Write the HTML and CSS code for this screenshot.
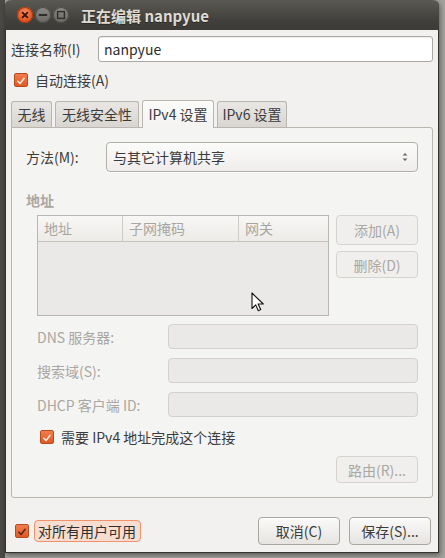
FILE: index.html
```html
<!doctype html>
<html lang="zh-CN">
<head>
    <meta charset="utf-8">
    <meta name="viewport" content="width=device-width, initial-scale=1">
    <title>正在编辑 nanpyue</title>
    <link rel="stylesheet" href="styles.css">
</head>
<body>
<div class="desktop">
    <div class="window">
        <div class="titlebar">
            <div class="controls">
                <span class="wbtn close">
                    <svg viewBox="0 0 16 16" width="16" height="16"><path d="M5.6 5.6l4.8 4.8M10.4 5.6l-4.8 4.8" stroke="#3b1608" stroke-width="1.8" stroke-linecap="round"/></svg>
                </span>
                <span class="wbtn">
                    <svg viewBox="0 0 16 16" width="16" height="16"><path d="M4.5 8h7" stroke="#2f2e2a" stroke-width="1.8" stroke-linecap="round"/></svg>
                </span>
                <span class="wbtn">
                    <svg viewBox="0 0 16 16" width="16" height="16"><rect x="4.6" y="4.6" width="6.8" height="6.8" fill="none" stroke="#2f2e2a" stroke-width="1.4"/></svg>
                </span>
            </div>
            <div class="title">正在编辑 nanpyue</div>
        </div>

        <div class="content">
            <div class="name-row">
                <label>连接名称(I)</label>
                <div class="entry">nanpyue</div>
            </div>

            <div class="check-row auto">
                <span class="check"><svg viewBox="0 0 14 14" width="14" height="14"><path d="M3.3 7.2l2.6 2.6 4.8-6" fill="none" stroke="#f6e9e1" stroke-width="1.8" stroke-linecap="round" stroke-linejoin="round"/></svg></span>
                自动连接(A)
            </div>

            <div class="tabs">
                <div class="tab t1">无线</div>
                <div class="tab t2">无线安全性</div>
                <div class="tab t3 active">IPv4 设置</div>
                <div class="tab t4">IPv6 设置</div>
            </div>

            <div class="panel">
                <div class="method-row">
                    <span class="method-label">方法(M):</span>
                    <div class="combo">
                        <span>与其它计算机共享</span>
                        <svg viewBox="0 0 8 14" width="8" height="14"><path d="M1.5 5.5L4 3l2.5 2.5zM1.5 8.5L4 11l2.5-2.5z" fill="#6b6964"/></svg>
                    </div>
                </div>

                <div class="section-title">地址</div>

                <div class="addr">
                    <div class="table">
                        <div class="thead">
                            <div class="th c1">地址</div>
                            <div class="th c2">子网掩码</div>
                            <div class="th c3">网关</div>
                        </div>
                        <div class="tbody">
                            <svg class="pointer" viewBox="0 0 13 20" width="13" height="20"><path d="M1 1v15.5l3.7-3.6 2.6 5.8 2.4-1.1-2.6-5.6h5.2z" fill="#fff" stroke="#111" stroke-width="1.1" stroke-linejoin="round"/></svg>
                        </div>
                    </div>
                    <div class="side-buttons">
                        <div class="button disabled">添加(A)</div>
                        <div class="button disabled">删除(D)</div>
                    </div>
                </div>

                <div class="fields">
                    <span class="field-label">DNS 服务器:</span>
                    <div class="field"></div>
                    <span class="field-label">搜索域(S):</span>
                    <div class="field"></div>
                    <span class="field-label">DHCP 客户端 ID:</span>
                    <div class="field"></div>
                </div>

                <div class="check-row require">
                    <span class="check"><svg viewBox="0 0 14 14" width="14" height="14"><path d="M3.3 7.2l2.6 2.6 4.8-6" fill="none" stroke="#f6e9e1" stroke-width="1.8" stroke-linecap="round" stroke-linejoin="round"/></svg></span>
                    需要 IPv4 地址完成这个连接
                </div>

                <div class="route-row">
                    <div class="button disabled">路由(R)...</div>
                </div>
            </div>

            <div class="footer">
                <div class="check-row all">
                    <span class="check"><svg viewBox="0 0 14 14" width="14" height="14"><path d="M3.3 7.2l2.6 2.6 4.8-6" fill="none" stroke="#5a2410" stroke-width="1.8" stroke-linecap="round" stroke-linejoin="round"/></svg></span>
                    <span class="focus">对所有用户可用</span>
                </div>
                <div class="actions">
                    <div class="button">取消(C)</div>
                    <div class="button">保存(S)...</div>
                </div>
            </div>
        </div>
    </div>
</div>
</body>
</html>
```

FILE: styles.css
```css
* {
    box-sizing: border-box;
}
body {
    margin: 0;
    background: #8e8c87;
    font-family: "Noto Sans CJK SC", "Noto Sans", sans-serif;
    font-size: 14px;
    color: #3c3c3c;
}
.desktop {
    width: 445px;
    height: 558px;
    padding-left: 5px;
    overflow: hidden;
    background: linear-gradient(90deg, #4a4945 0, #4a4945 5px, #a3a19c 5px);
}
.window {
    width: 434px;
    height: 553px;
    display: flex;
    flex-direction: column;
    background: #f2f1f0;
    border: 1px solid #33322e;
    border-top: none;
    border-radius: 6px 6px 0 0;
    box-shadow: 1px 2px 5px rgba(0, 0, 0, 0.45);
}

/* title bar */
.titlebar {
    height: 30px;
    flex: none;
    display: flex;
    align-items: center;
    margin: 0 -1px;
    padding-left: 12px;
    background: linear-gradient(#5b5953, #403f3b 70%, #3c3b37);
    border-radius: 6px 6px 0 0;
}
.controls {
    display: flex;
    gap: 2px;
}
.wbtn {
    width: 16px;
    height: 16px;
    border-radius: 50%;
    display: flex;
    background: linear-gradient(#8c8a85, #6a6863);
    box-shadow: inset 0 0 0 1px #4b4a46;
}
.wbtn.close {
    background: radial-gradient(circle at 50% 35%, #f88a5a, #e0501c 70%, #c44513);
    box-shadow: inset 0 0 0 1px #a43d12;
}
.title {
    margin-left: 12px;
    font-size: 15px;
    font-weight: bold;
    color: #dfdbd2;
    text-shadow: 0 1px 0 #2a2925;
}

/* main area */
.content {
    flex: 1;
    display: flex;
    flex-direction: column;
    padding: 6px 5px 0 5px;
}
.name-row {
    display: flex;
    align-items: center;
    height: 26px;
}
.name-row label {
    width: 87px;
}
.entry {
    flex: 1;
    height: 26px;
    padding: 0 5px;
    line-height: 24px;
    background: #fff;
    border: 1px solid #aba8a3;
    border-radius: 3px;
    box-shadow: inset 0 1px 1px rgba(0, 0, 0, 0.08);
    color: #2c2c2c;
}

.check-row {
    display: flex;
    align-items: center;
    height: 16px;
}
.check {
    width: 14px;
    height: 14px;
    flex: none;
    display: flex;
    margin-right: 7px;
    border: 1px solid #b54b1f;
    border-radius: 2px;
    background: linear-gradient(#f27d4c, #df5a25);
}
.check-row.auto {
    margin-top: 10px;
    padding-left: 3px;
}

/* notebook */
.tabs {
    display: flex;
    align-items: flex-end;
    gap: 3px;
    height: 28px;
    margin-top: 11px;
}
.tab {
    height: 26px;
    line-height: 25px;
    text-align: center;
    white-space: nowrap;
    background: linear-gradient(#e9e7e4, #d9d6d1);
    border: 1px solid #b9b6b0;
    border-bottom: none;
    border-radius: 3px 3px 0 0;
    color: #3c3c3c;
}
.tab.t1 {
    width: 41px;
}
.tab.t2 {
    width: 84px;
}
.tab.t3 {
    width: 72px;
}
.tab.t4 {
    width: 70px;
}
.tab.active {
    height: 28px;
    line-height: 27px;
    position: relative;
    top: 1px;
    background: linear-gradient(#fbfbfa, #f4f3f2);
    z-index: 1;
}
.panel {
    height: 371px;
    flex: none;
    padding: 14px;
    border: 1px solid #b9b6b0;
    border-radius: 0 3px 3px 3px;
    background: #f4f4f3;
}

.method-row {
    display: flex;
    align-items: center;
    height: 30px;
}
.method-label {
    width: 80px;
}
.combo {
    flex: 1;
    height: 30px;
    display: flex;
    align-items: center;
    justify-content: space-between;
    padding: 0 8px 0 6px;
    background: linear-gradient(#fbfbfa, #efedeb);
    border: 1px solid #b3afa9;
    border-radius: 4px;
    box-shadow: 0 1px 0 rgba(255, 255, 255, 0.8);
}

.section-title {
    margin-top: 20px;
    height: 16px;
    line-height: 16px;
    font-weight: bold;
    color: #aaa7a1;
}

.addr {
    display: flex;
    gap: 7px;
    margin-top: 7px;
    margin-left: 11px;
}
.table {
    width: 292px;
    height: 101px;
    display: flex;
    flex-direction: column;
    border: 1px solid #bab7b2;
    background: #ebe9e7;
}
.thead {
    display: flex;
    height: 26px;
    background: linear-gradient(#f8f7f6, #ecebe8);
    border-bottom: 1px solid #c6c3be;
}
.th {
    padding-left: 6px;
    line-height: 25px;
    color: #a9a6a1;
    border-right: 1px solid #cfccc7;
}
.th.c1 {
    width: 85px;
}
.th.c2 {
    width: 116px;
}
.th.c3 {
    flex: 1;
    border-right: none;
}
.tbody {
    flex: 1;
    position: relative;
}
.pointer {
    position: absolute;
    left: 213px;
    top: 50px;
}
.side-buttons {
    display: flex;
    flex-direction: column;
    gap: 6px;
    width: 82px;
}

.button {
    height: 28px;
    display: flex;
    align-items: center;
    justify-content: center;
    background: linear-gradient(#fafaf9, #e6e4e1);
    border: 1px solid #aaa6a0;
    border-radius: 4px;
    box-shadow: inset 0 1px 0 #fff;
    color: #3c3c3c;
}
.button.disabled {
    background: #f0efed;
    border-color: #d6d3ce;
    color: #aaa7a2;
    box-shadow: none;
}
.side-buttons .button {
    height: 30px;
}
.side-buttons .button + .button {
    height: 27px;
}

.fields {
    display: grid;
    grid-template-columns: 131px 1fr;
    grid-auto-rows: 25px;
    row-gap: 9px;
    align-items: center;
    margin-top: 8px;
    margin-left: 11px;
}
.field-label {
    color: #aaa7a2;
}
.field {
    height: 25px;
    background: #ebe9e7;
    border: 1px solid #d4d1cc;
    border-radius: 4px;
}

.check-row.require {
    margin-top: 12px;
    margin-left: 14px;
}

.route-row {
    display: flex;
    justify-content: flex-end;
    margin-top: 11px;
}
.route-row .button {
    width: 82px;
    height: 27px;
}

/* bottom bar */
.footer {
    flex: 1;
    display: flex;
    align-items: flex-start;
    justify-content: space-between;
    padding: 19px 2px 0 4px;
}
.check-row.all {
    height: 28px;
}
.check-row.all .check {
    margin-right: 5px;
}
.focus {
    height: 22px;
    line-height: 20px;
    padding: 0 4px 0 3px;
    background: #f7ddd0;
    border: 1px solid #f0936b;
    border-radius: 4px;
    color: #2f2f2f;
}
.actions {
    display: flex;
    gap: 9px;
}
.actions .button {
    width: 82px;
}
```
